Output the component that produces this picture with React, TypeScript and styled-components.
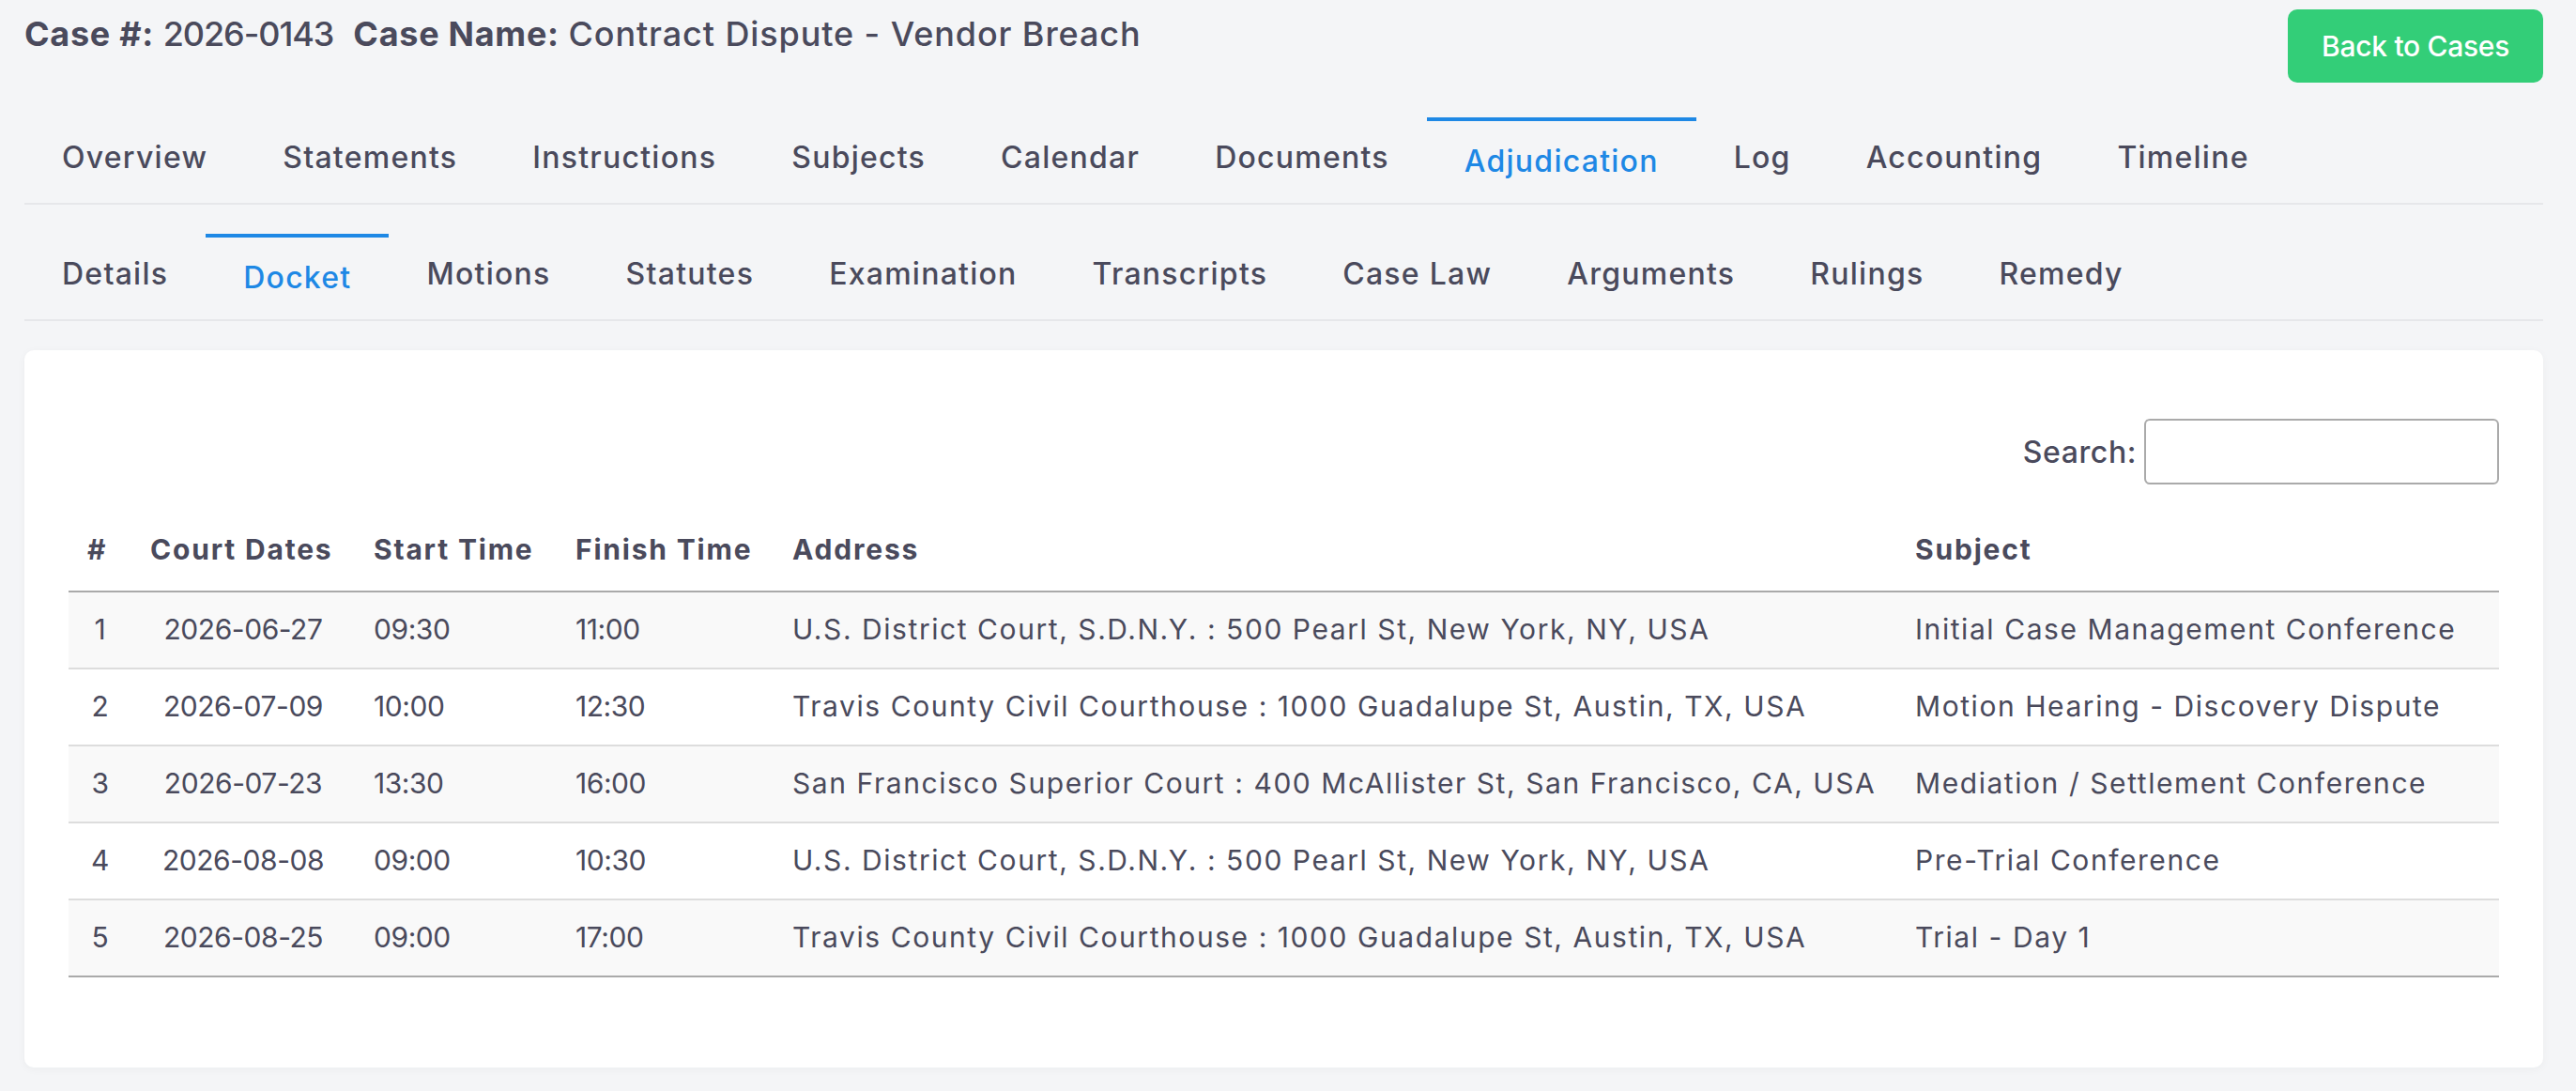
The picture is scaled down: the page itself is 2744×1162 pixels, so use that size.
import React, { useState } from 'react';
import styled, { createGlobalStyle } from 'styled-components';

const GlobalStyle = createGlobalStyle`
  html, body {
    margin: 0;
    padding: 0;
    background-color: #f4f5f7;
  }
  body {
    font-family: Inter, "Open Sans", "Liberation Sans", sans-serif;
    color: #4a4a5c;
  }
  * {
    box-sizing: border-box;
  }
`;

const Page = styled.div`
  padding: 10px 35px 24px 26px;
`;

const HeaderRow = styled.div`
  display: flex;
  justify-content: space-between;
  align-items: flex-start;
`;

const CaseTitle = styled.h1`
  margin: 0;
  padding-top: 5px;
  font-size: 36px;
  line-height: 1.2;
  font-weight: 500;
  color: #4a4a5c;
`;

const TitleLabel = styled.span`
  font-weight: 700;
  letter-spacing: 0.02em;
`;

const TitleValue = styled.span<{ tight?: boolean }>`
  letter-spacing: ${props => (props.tight ? '-0.03em' : '0.025em')};
`;

const TitleGap = styled.span`
  display: inline-block;
  width: 21px;
`;

const BackButton = styled.button`
  height: 78px;
  padding: 0 36px;
  border: none;
  border-radius: 10px;
  background-color: #33ce78;
  color: #fff;
  font-family: inherit;
  font-size: 30px;
  font-weight: 500;
  letter-spacing: -0.01em;
  cursor: pointer;
`;

const TabBar = styled.nav<{ first?: boolean }>`
  display: flex;
  align-items: flex-start;
  margin-top: ${props => (props.first ? '37px' : '31px')};
  border-bottom: 2px solid #e6e7ea;
`;

const Tab = styled.a<{ active?: boolean }>`
  display: block;
  padding: ${props => (props.active ? '19px 40px 20px' : '19px 40px 24px')};
  border-top: ${props => (props.active ? '4px solid #1e88e5' : 'none')};
  font-size: 32px;
  line-height: 48px;
  font-weight: 500;
  letter-spacing: 0.039em;
  color: ${props => (props.active ? '#1e88e5' : '#4a4a5c')};
  text-decoration: none;
  white-space: nowrap;
  cursor: pointer;
`;

const Card = styled.section`
  margin-top: 31px;
  padding: 73px 47px 96px;
  background-color: #fff;
  border-radius: 10px;
  box-shadow: 0 2px 10px rgba(30, 40, 60, 0.04);
`;

const SearchRow = styled.div`
  display: flex;
  justify-content: flex-end;
  align-items: center;
  gap: 8px;
`;

const SearchLabel = styled.label`
  font-size: 32px;
  font-weight: 500;
  letter-spacing: 0.018em;
`;

const SearchInput = styled.input`
  width: 378px;
  height: 70px;
  padding: 0 14px;
  border: 2px solid #aaaaaa;
  border-radius: 6px;
  font-family: inherit;
  font-size: 30px;
  color: #4a4a5c;
  outline: none;
`;

const Table = styled.table`
  width: 100%;
  margin-top: 26px;
  border-collapse: collapse;
  table-layout: fixed;
`;

const HeadCell = styled.th`
  padding: 21px 20px;
  font-size: 30px;
  line-height: 45px;
  font-weight: 700;
  letter-spacing: 0.06em;
  text-align: left;
  white-space: nowrap;
  border-bottom: 2px solid #aaaaaa;
`;

const Row = styled.tr<{ striped?: boolean; last?: boolean }>`
  background-color: ${props => (props.striped ? '#f9f9f9' : '#fff')};
  border-bottom: 2px solid ${props => (props.last ? '#aaaaaa' : '#dddddd')};
`;

const Cell = styled.td<{ center?: boolean; numeric?: boolean }>`
  padding: 17px 20px 18px;
  font-size: 30px;
  line-height: 45px;
  font-weight: 400;
  letter-spacing: ${props => (props.numeric ? '-0.015em' : '0.052em')};
  text-align: ${props => (props.center ? 'center' : 'left')};
  white-space: nowrap;
`;

const mainTabs = [
  'Overview',
  'Statements',
  'Instructions',
  'Subjects',
  'Calendar',
  'Documents',
  'Adjudication',
  'Log',
  'Accounting',
  'Timeline',
];

const subTabs = [
  'Details',
  'Docket',
  'Motions',
  'Statutes',
  'Examination',
  'Transcripts',
  'Case Law',
  'Arguments',
  'Rulings',
  'Remedy',
];

const columns = [
  { title: '#', width: 67 },
  { title: 'Court Dates', width: 238 },
  { title: 'Start Time', width: 215 },
  { title: 'Finish Time', width: 231 },
  { title: 'Address', width: 1196 },
  { title: 'Subject', width: 642 },
];

const docket = [
  {
    date: '2026-06-27',
    start: '09:30',
    finish: '11:00',
    address: 'U.S. District Court, S.D.N.Y. : 500 Pearl St, New York, NY, USA',
    subject: 'Initial Case Management Conference',
  },
  {
    date: '2026-07-09',
    start: '10:00',
    finish: '12:30',
    address: 'Travis County Civil Courthouse : 1000 Guadalupe St, Austin, TX, USA',
    subject: 'Motion Hearing - Discovery Dispute',
  },
  {
    date: '2026-07-23',
    start: '13:30',
    finish: '16:00',
    address: 'San Francisco Superior Court : 400 McAllister St, San Francisco, CA, USA',
    subject: 'Mediation / Settlement Conference',
  },
  {
    date: '2026-08-08',
    start: '09:00',
    finish: '10:30',
    address: 'U.S. District Court, S.D.N.Y. : 500 Pearl St, New York, NY, USA',
    subject: 'Pre-Trial Conference',
  },
  {
    date: '2026-08-25',
    start: '09:00',
    finish: '17:00',
    address: 'Travis County Civil Courthouse : 1000 Guadalupe St, Austin, TX, USA',
    subject: 'Trial - Day 1',
  },
];

const App: React.FC = () => {
  const [mainTab, setMainTab] = useState('Adjudication');
  const [subTab, setSubTab] = useState('Docket');
  const [query, setQuery] = useState('');

  const rows = docket.filter(item =>
    Object.values(item).join(' ').toLowerCase().includes(query.toLowerCase())
  );

  return (
    <>
      <GlobalStyle />
      <Page>
        <HeaderRow>
          <CaseTitle>
            <TitleLabel>Case #:</TitleLabel> <TitleValue tight>2026-0143</TitleValue>
            <TitleGap />
            <TitleLabel>Case Name:</TitleLabel> <TitleValue>Contract Dispute - Vendor Breach</TitleValue>
          </CaseTitle>
          <BackButton>Back to Cases</BackButton>
        </HeaderRow>

        <TabBar first>
          {mainTabs.map(tab => (
            <Tab key={tab} active={tab === mainTab} onClick={() => setMainTab(tab)}>
              {tab}
            </Tab>
          ))}
        </TabBar>

        <TabBar>
          {subTabs.map(tab => (
            <Tab key={tab} active={tab === subTab} onClick={() => setSubTab(tab)}>
              {tab}
            </Tab>
          ))}
        </TabBar>

        <Card>
          <SearchRow>
            <SearchLabel htmlFor="docket-search">Search:</SearchLabel>
            <SearchInput
              id="docket-search"
              type="search"
              value={query}
              onChange={e => setQuery(e.target.value)}
            />
          </SearchRow>

          <Table>
            <colgroup>
              {columns.map(col => (
                <col key={col.title} style={{ width: col.width }} />
              ))}
            </colgroup>
            <thead>
              <tr>
                {columns.map(col => (
                  <HeadCell key={col.title}>{col.title}</HeadCell>
                ))}
              </tr>
            </thead>
            <tbody>
              {rows.map((item, i) => (
                <Row key={item.date} striped={i % 2 === 0} last={i === rows.length - 1}>
                  <Cell center numeric>{docket.indexOf(item) + 1}</Cell>
                  <Cell center numeric>{item.date}</Cell>
                  <Cell numeric>{item.start}</Cell>
                  <Cell numeric>{item.finish}</Cell>
                  <Cell>{item.address}</Cell>
                  <Cell>{item.subject}</Cell>
                </Row>
              ))}
            </tbody>
          </Table>
        </Card>
      </Page>
    </>
  );
};

export default App;
